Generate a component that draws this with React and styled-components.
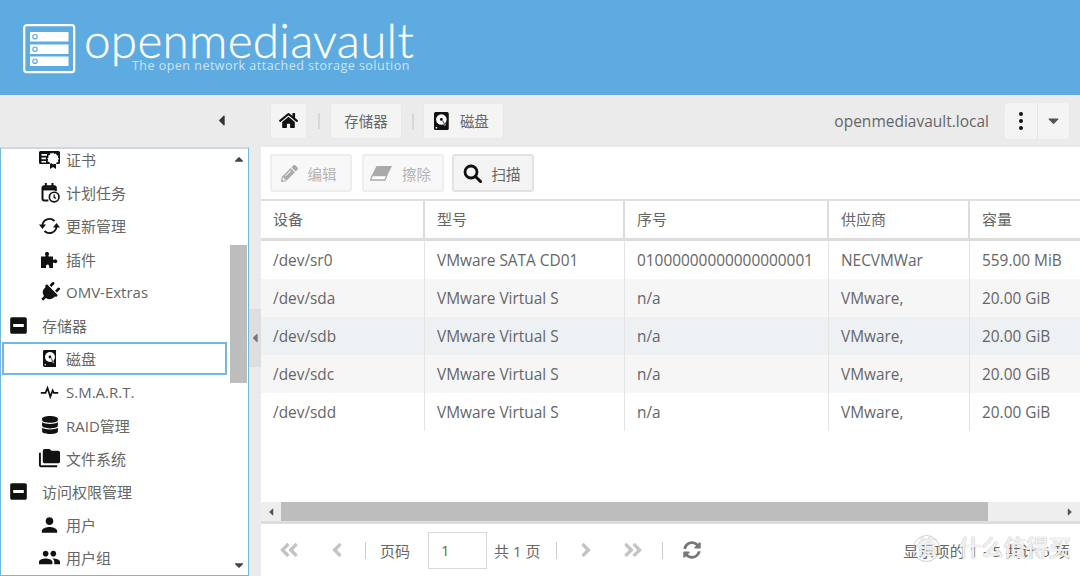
import React from "react";
import styled, { createGlobalStyle } from "styled-components";
import { FaHome, FaPencilAlt, FaPlug, FaDatabase, FaSyncAlt, FaMinusSquare, FaAngleDoubleLeft, FaAngleDoubleRight, FaAngleLeft, FaAngleRight, FaCaretDown, FaCaretUp, FaCaretLeft, FaCaretRight } from "react-icons/fa";
import { MdPerson, MdPeople, MdFolderCopy } from "react-icons/md";

const Global = createGlobalStyle`
  html, body { margin: 0; padding: 0; background: #fff; }
  * { box-sizing: border-box; }
  body { font-family: "Open Sans", "Noto Sans CJK SC", sans-serif; color: #666; }
`;
const Page = styled.div`width:1080px;height:576px;overflow:hidden;display:flex;flex-direction:column;position:relative;`;
const Banner = styled.header`height:95px;background:#5dabe0;display:flex;align-items:flex-start;padding:24px 0 0 23px;gap:8px;flex:none;`;
const BrandText = styled.div`display:flex;flex-direction:column;color:#fff;margin-top:-7px;`;
const BrandName = styled.div`font-family:"Lato",sans-serif;font-weight:300;font-size:47.7px;line-height:46px;letter-spacing:.25px;white-space:nowrap;-webkit-text-stroke:.3px #fff;`;
const Tagline = styled.div`font-size:12.5px;line-height:14px;color:#cde4f5;margin:-4px 0 0 48px;letter-spacing:.48px;white-space:nowrap;`;
const TopBar = styled.div`height:52px;background:#ebebeb;display:flex;align-items:center;flex:none;padding-bottom:1px;`;
const CollapseArea = styled.div`width:270px;display:flex;justify-content:flex-end;padding-right:40px;color:#333;font-size:17px;`;
const Crumb = styled.div`height:36px;width:${p=>p.$w}px;background:#f4f4f4;border:1px solid #e8e8e8;border-radius:3px;display:flex;align-items:center;justify-content:center;gap:11px;padding-right:${p=>p.$pr||0}px;font-size:14.5px;color:#666;flex:none;`;
const Sep = styled.div`width:2px;height:16px;background:#d8d8d8;margin:0 ${p=>p.$m||10}px;flex:none;`;
const Host = styled.div`margin-left:auto;font-size:15.5px;color:#666;margin-right:16px;`;
const Split = styled.div`display:flex;width:64px;height:36px;background:#f4f4f4;border-radius:3px;margin-right:11px;`;
const SplitPart = styled.div`flex:1;display:flex;align-items:center;justify-content:center;border-left:${p=>p.$line?"1px solid #e4e4e4":"none"};color:${p=>p.$c};font-size:17px;`;
const Dots = styled.div`display:flex;flex-direction:column;gap:3px;i{width:4px;height:4px;border-radius:2px;background:#111;display:block;}`;
const Body = styled.div`flex:1;display:flex;min-height:0;`;
const Sidebar = styled.aside`width:249px;border:1px solid #76b6e4;border-top:2px solid #cfd8de;display:flex;background:#fff;overflow:hidden;padding-left:1px;`;
const TreeList = styled.div`flex:1;min-width:0;margin-top:-6px;padding-right:2px;`;
const TreeRow = styled.div`height:33.2px;display:flex;align-items:center;padding-left:${p=>p.$group?"5px":"36px"};font-size:15px;color:#666;gap:${p=>p.$group?"12px":"5px"};${p=>p.$active?"border:2px solid #76b6e4;padding-left:34px;":""}`;
const TreeIcon = styled.span`width:23px;height:22px;display:flex;align-items:center;justify-content:center;color:#111;font-size:${p=>p.$s||18}px;flex:none;`;
const VScroll = styled.div`width:19px;flex:none;display:flex;flex-direction:column;align-items:center;background:#fff;color:#444;font-size:14px;`;
const ScrollBtn = styled.div`height:20px;flex:none;display:flex;align-items:center;justify-content:center;`;
const ScrollTrack = styled.div`flex:1;width:100%;padding:76px 1px 0 1px;`;
const ScrollThumb = styled.div`height:138px;background:#bdbdbd;`;
const Splitter = styled.div`width:12px;background:#ebebeb;display:flex;align-items:center;`;
const Handle = styled.div`width:100%;height:58px;margin-top:-48px;background:#dedede;display:flex;align-items:center;justify-content:center;color:#777;font-size:14px;`;
const Main = styled.main`flex:1;min-width:0;display:flex;flex-direction:column;background:#fff;`;
const Actions = styled.div`height:52px;display:flex;align-items:center;padding:0 0 0 9px;flex:none;`;
const ActionBtn = styled.div`width:82px;height:38px;margin-right:${p=>p.$mr}px;padding-right:${p=>p.$on?3:5}px;border:${p=>p.$on?"2px solid #e2e2e2":"2px solid #eee"};border-radius:3px;background:${p=>p.$on?"#f4f4f4":"#f8f8f8"};display:flex;align-items:center;justify-content:center;gap:10px;font-size:14.5px;color:${p=>p.$on?"#666":"#b4b4b4"};svg{flex:none;}`;
const Row = styled.div`display:flex;height:${p=>p.$h}px;flex:none;background:${p=>p.$bg||"#fff"};`;
const HeadRow = styled(Row)`border-top:2px solid #e0e0e0;border-bottom:3px solid #dcdcdc;`;
const HeadCell = styled.div`width:${p=>p.$w}px;flex:none;padding:0 0 3px 12px;display:flex;align-items:center;font-size:15px;color:#666;border-right:2px solid #dcdcdc;&:last-child{border-right:0;}`;
const Cell = styled.div`width:${p=>p.$w}px;flex:none;padding:0 0 0 12px;display:flex;align-items:center;font-size:15.4px;color:#666;border-right:1px solid #e4e4e4;white-space:nowrap;overflow:hidden;&:last-child{border-right:0;}`;
const Spacer = styled.div`flex:1;`;
const HScroll = styled.div`height:19px;background:#eee;display:flex;align-items:stretch;flex:none;color:#555;font-size:12px;`;
const HBtn = styled.div`width:20px;flex:none;display:flex;align-items:center;justify-content:center;`;
const HThumb = styled.div`width:707px;background:#bdbdbd;`;
const HFill = styled.div`flex:1;`;
const Pager = styled.div`height:55px;border-top:3px solid #ddd;display:flex;align-items:center;padding-left:18px;flex:none;position:relative;font-size:15px;color:#666;`;
const PagerIcon = styled.div`width:${p=>p.$w}px;margin-left:${p=>p.$ml||0}px;display:flex;justify-content:center;color:${p=>p.$c||"#c4c4c4"};font-size:${p=>p.$s||22}px;flex:none;`;
const PagerSep = styled.div`width:1px;height:17px;background:#ccc;flex:none;margin:0 ${p=>p.$m}px 0 ${p=>p.$l}px;`;
const PageInput = styled.div`width:59px;height:37px;border:1px solid #d8d8d8;display:flex;align-items:center;padding-left:12px;font-size:15px;margin:0 7px 0 18px;flex:none;`;
const Display = styled.div`margin-left:auto;margin-right:10px;white-space:nowrap;letter-spacing:.35px;color:#666;font-size:15.2px;`;
const Watermark = styled.div`position:absolute;right:9px;top:10px;display:flex;align-items:center;gap:18px;color:rgba(255,255,255,.88);font-size:22.5px;line-height:28px;font-weight:500;pointer-events:none;white-space:nowrap;text-shadow:0 0 1px rgba(130,130,130,.9);`;
const WmBadge = styled.div`width:27px;height:27px;border-radius:50%;border:1px solid rgba(190,190,190,.7);display:flex;align-items:center;justify-content:center;font-size:20px;color:rgba(255,255,255,.9);`;

const Logo = () => (
  <svg width="53" height="50" viewBox="0 0 53 50" style={{flex:"none"}}>
    <rect x="1.2" y="1.2" width="50" height="47" rx="2.5" fill="none" stroke="#fff" strokeWidth="2.2"/>
    {[8,20.5,32.5].map(y=>(
      <g key={y}>
        <rect x="7" y={y} width="38.5" height="9.5" fill="#fff"/>
        <circle cx="12" cy={y+4.7} r="2.2" fill="none" stroke="#5dabe0" strokeWidth="1.2"/>
      </g>
    ))}
  </svg>
);
const Disk = ({s=17}) => (
  <svg width={s*0.82} height={s} viewBox="0 0 14 17">
    <rect width="14" height="17" rx="1.5" fill="#111"/>
    <circle cx="7" cy="7" r="5" fill="#fff"/>
    <circle cx="7" cy="7" r="1.4" fill="#111"/>
    <path d="M7.5 8l2.5 5 1-.6L8.5 7.5z" fill="#111" stroke="#fff" strokeWidth=".5"/>
    <circle cx="2.3" cy="14.8" r=".8" fill="#fff"/>
  </svg>
);
const Cert = () => (
  <svg width="21" height="20" viewBox="0 0 21 20">
    <path fill="#111" d="M1.5 1h18A1.5 1.5 0 0 1 21 2.5v10a1.5 1.5 0 0 1-1.500 1.500H17v5l-3-2-3 2v-5H1.500A1.500 1.500 0 0 1 0 12.500v-10A1.500 1.500 0 0 1 1.500 1z"/>
    <path fill="#fff" d="M2.500 4H8v1.800H2.500zM2.500 7.500H7v1.800H2.500zM2.500 11H7v1.500H2.500z"/>
    <path fill="#fff" d="M14 2.500l1.300 1.400 1.800-.5.500 1.800 1.800.5-.5 1.800 1.300 1.300-1.300 1.300.5 1.800-1.800.500-.500 1.800-1.800-.500L14 14.500l-1.300-1.300-1.800.500-.5-1.800-1.800-.500.5-1.800L8.300 8.500l1.300-1.300-.5-1.800 1.800-.500.5-1.800 1.800.500z"/>
  </svg>
);
const CalClock = () => (
  <svg width="20" height="21" viewBox="0 0 24 25"><path fill="none" stroke="#111" strokeWidth="2.4" d="M10 22H5a2 2 0 0 1-2-2V7a2 2 0 0 1 2-2h12a2 2 0 0 1 2 2v4"/><path stroke="#111" strokeWidth="2.4" d="M7 1v5M15 1v5"/><path fill="#111" d="M3 6h16v4H3z"/><circle cx="17" cy="18" r="5.800" fill="#fff" stroke="#111" strokeWidth="2"/><path d="M17 15v3.400l2.200 1.200" fill="none" stroke="#111" strokeWidth="1.500"/></svg>
);
const Refresh = () => (
  <svg width="21" height="18" viewBox="0 0 21 18">
    <path fill="none" stroke="#111" strokeWidth="1.800" d="M3.500 8.500A7 7 0 0 1 15.500 4M17.500 9.500A7 7 0 0 1 5.500 14"/>
    <path fill="#111" d="M0 7.500h7L3.500 12zM14 10.500h7L17.500 6z"/>
  </svg>
);
const Puzzle = () => (
  <svg width="19" height="19" viewBox="0 0 19 19">
    <path fill="#111" d="M1 6.500h4.500V5.200a2 2 0 1 1 3 0v1.300H13v3.300h1.200a1.900 1.900 0 1 1 0 3H13V18H9.200v-1.800a1.600 1.600 0 1 0-3.200 0V18H1z"/>
  </svg>
);
const Pulse = () => (
  <svg width="19" height="14" viewBox="0 0 24 16"><path fill="none" stroke="#111" strokeWidth="2.200" d="M1 9h6l2.500-6 3.500 11 3-8 1.500 3H23"/></svg>
);
const Eraser = () => (
  <svg width="22" height="15" viewBox="0 0 22 15">
    <path fill="#aaa" d="M6.500 0H22l-4.500 9H2z"/>
    <path fill="#fff" stroke="#aaa" strokeWidth="1.300" d="M2.300 9.500h14.600l-2 4.500H.8z"/>
  </svg>
);
const Loupe = () => (
  <svg width="19" height="19" viewBox="0 0 19 19">
    <circle cx="8" cy="8" r="6" fill="none" stroke="#111" strokeWidth="2.800"/>
    <path d="M12.500 12.500l5 5" stroke="#111" strokeWidth="3" strokeLinecap="round"/>
  </svg>
);

const cols=[164,200,204,141,110];
const head=["设备","型号","序号","供应商","容量"];
const rows=[
  ["/dev/sr0","VMware SATA CD01","01000000000000000001","NECVMWar","559.00 MiB","#fff"],
  ["/dev/sda","VMware Virtual S","n/a","VMware,","20.00 GiB","#f6f6f6"],
  ["/dev/sdb","VMware Virtual S","n/a","VMware,","20.00 GiB","#edf1f4"],
  ["/dev/sdc","VMware Virtual S","n/a","VMware,","20.00 GiB","#f6f6f6"],
  ["/dev/sdd","VMware Virtual S","n/a","VMware,","20.00 GiB","#fff"],
];
const tree=[
  {t:"证书",i:<Cert/>},
  {t:"计划任务",i:<CalClock/>},
  {t:"更新管理",i:<Refresh/>},
  {t:"插件",i:<Puzzle/>},
  {t:"OMV-Extras",i:<FaPlug style={{transform:"rotate(45deg)"}}/>,s:21},
  {t:"存储器",g:1},
  {t:"磁盘",i:<Disk/>,a:1},
  {t:"S.M.A.R.T.",i:<Pulse/>},
  {t:"RAID管理",i:<FaDatabase/>},
  {t:"文件系统",i:<MdFolderCopy/>,s:25},
  {t:"访问权限管理",g:1},
  {t:"用户",i:<MdPerson/>,s:24},
  {t:"用户组",i:<MdPeople/>,s:25},
];

export default function App(){
  return (
    <Page>
      <Global/>
      <Banner>
        <Logo/>
        <BrandText>
          <BrandName>openmediavault</BrandName>
          <Tagline>The open network attached storage solution</Tagline>
        </BrandText>
      </Banner>
      <TopBar>
        <CollapseArea><FaCaretLeft/></CollapseArea>
        <Crumb $w={37}><FaHome color="#111" size={19}/></Crumb>
        <Sep $m={10.5}/>
        <Crumb $w={72}>存储器</Crumb>
        <Sep $m={9.5}/>
        <Crumb $w={81} $pr={4}><Disk s={18}/>磁盘</Crumb>
        <Host>openmediavault.local</Host>
        <Split>
          <SplitPart $c="#111"><Dots><i/><i/><i/></Dots></SplitPart>
          <SplitPart $line $c="#555"><FaCaretDown/></SplitPart>
        </Split>
      </TopBar>
      <Body>
        <Sidebar>
          <TreeList>
            {tree.map(r=>(
              <TreeRow key={r.t} $group={r.g} $active={r.a}>
                {r.g ? <TreeIcon $s={19}><FaMinusSquare/></TreeIcon> : <TreeIcon $s={r.s}>{r.i}</TreeIcon>}
                {r.t}
              </TreeRow>
            ))}
          </TreeList>
          <VScroll>
            <ScrollBtn><FaCaretUp/></ScrollBtn>
            <ScrollTrack><ScrollThumb/></ScrollTrack>
            <ScrollBtn><FaCaretDown/></ScrollBtn>
          </VScroll>
        </Sidebar>
        <Splitter><Handle><FaCaretLeft/></Handle></Splitter>
        <Main>
          <Actions>
            <ActionBtn $mr={10}><FaPencilAlt color="#aaa" size={17}/>编辑</ActionBtn>
            <ActionBtn $mr={8}><Eraser/>擦除</ActionBtn>
            <ActionBtn $on $mr={0}><Loupe/>扫描</ActionBtn>
          </Actions>
          <HeadRow $h={42}>{head.map((h,i)=><HeadCell key={h} $w={cols[i]}>{h}</HeadCell>)}</HeadRow>
          {rows.map(r=>(
            <Row key={r[0]} $h={38} $bg={r[5]}>
              {cols.map((w,i)=><Cell key={i} $w={w}>{r[i]}</Cell>)}
            </Row>
          ))}
          <Spacer/>
          <HScroll>
            <HBtn><FaCaretLeft/></HBtn>
            <HThumb/>
            <HFill/>
            <HBtn><FaCaretRight/></HBtn>
          </HScroll>
          <Pager>
            <PagerIcon $w={20}><FaAngleDoubleLeft/></PagerIcon>
            <PagerIcon $w={20} $ml={28}><FaAngleLeft/></PagerIcon>
            <PagerSep $l={18} $m={14}/>
            页码
            <PageInput>1</PageInput>
            共 1 页
            <PagerSep $l={16} $m={19}/>
            <PagerIcon $w={20}><FaAngleRight/></PagerIcon>
            <PagerIcon $w={20} $ml={27}><FaAngleDoubleRight/></PagerIcon>
            <PagerSep $l={19} $m={19}/>
            <PagerIcon $w={20} $c="#777" $s={18}><FaSyncAlt/></PagerIcon>
            <Display>显示项的 1 - 5 共计 5 项</Display>
            <Watermark><WmBadge>值</WmBadge>什么值得买</Watermark>
          </Pager>
        </Main>
      </Body>
    </Page>
  );
}
